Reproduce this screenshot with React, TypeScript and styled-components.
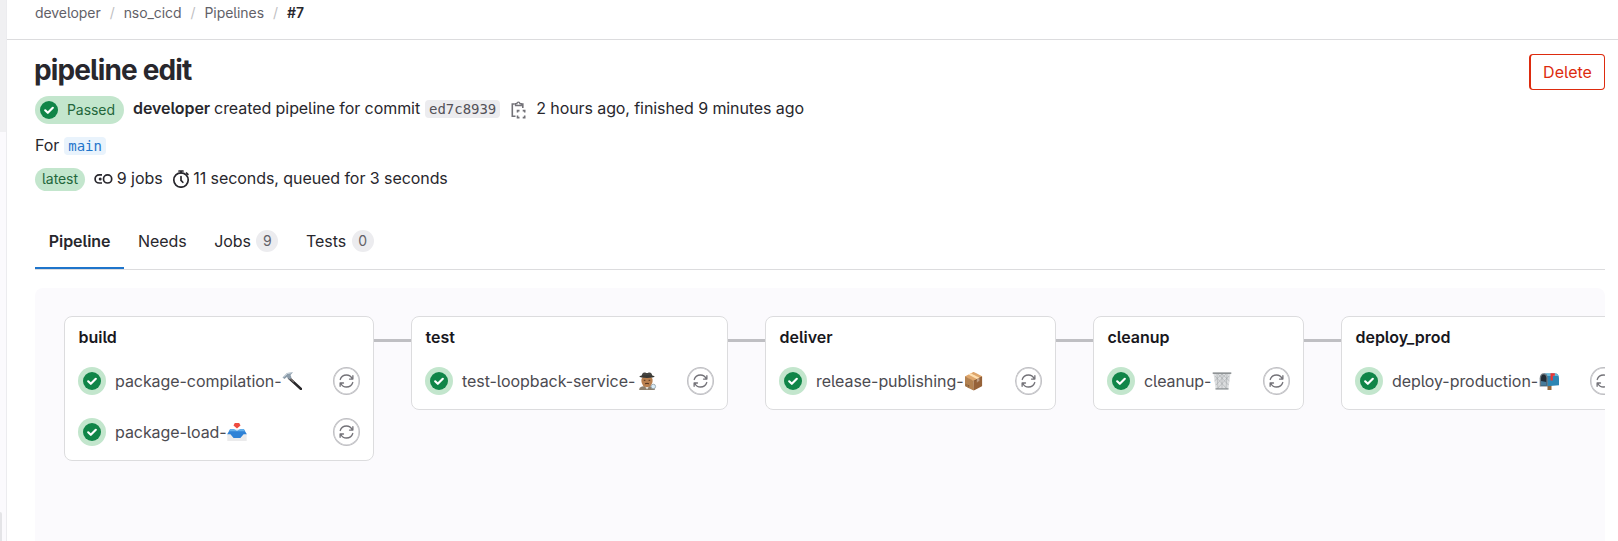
import React from "react";
import styled, { createGlobalStyle } from "styled-components";

const GlobalStyle = createGlobalStyle`
  *, *::before, *::after { box-sizing: border-box; }
  body {
    margin: 0;
    background: #fff;
    color: #28272d;
    font: 400 16px/24px Inter, "Liberation Sans", sans-serif;
    font-feature-settings: "cv05";
    letter-spacing: -0.07px;
    overflow: hidden;
  }
  svg { display: block; flex: none; }
`;

const Shell = styled.div`
  display: flex;
  height: 541px;
  overflow: hidden;
`;

const Sidebar = styled.aside`
  display: flex;
  flex-direction: column;
  justify-content: space-between;
  flex: none;
  width: 7px;
  background: #fbfafd;
  border-right: 1px solid #ececef;
`;

const SidebarTop = styled.div`
  height: 132px;
  background: #f0f0f2;
`;

const SidebarHandle = styled.div`
  width: 2px;
  height: 29px;
  background: #e4e4e7;
  border-top-right-radius: 2px;
`;

const Main = styled.main`
  flex: 1;
  min-width: 0;
  display: flex;
  flex-direction: column;
`;

const TopBar = styled.nav`
  display: flex;
  flex: none;
  height: 40px;
  padding-left: 28px;
  border-bottom: 1px solid #dcdcde;
  font-size: 14px;
  line-height: 26px;
  color: #626168;
`;

const Crumb = styled.span<{ $current?: boolean }>`
  font-weight: ${(p) => (p.$current ? 600 : 400)};
  color: ${(p) => (p.$current ? "#28272d" : "#626168")};
  &:not(:last-child)::after {
    content: "/";
    padding: 0 9px;
    color: #bfbfc3;
  }
`;

const Content = styled.div`
  flex: 1;
  display: flex;
  flex-direction: column;
  min-height: 0;
  padding: 14px 13px 0 28px;
`;

const TitleRow = styled.header`
  display: flex;
  justify-content: space-between;
  height: 42px;
`;

const Title = styled.h1`
  margin: 0 0 0 -1px;
  font-size: 28px;
  line-height: 33px;
  font-weight: 650;
  letter-spacing: -0.88px;
`;

const DeleteButton = styled.button`
  width: 76px;
  height: 36px;
  padding: 0;
  border: 1px solid #dd2b0e;
  border-left-width: 2px;
  border-radius: 4px;
  background: #fff;
  color: #dd2b0e;
  font: inherit;
`;

const StatusRow = styled.div`
  display: flex;
  height: 28px;
  line-height: 25px;
  white-space: pre;
`;

const StatusPill = styled.span`
  display: flex;
  align-items: center;
  width: 89px;
  height: 28px;
  padding-left: 5px;
  margin-right: 9px;
  gap: 9px;
  border-radius: 14px;
  background: #c3e6cd;
  color: #24663b;
  font-size: 14px;
  line-height: 27px;
`;

const PillText = styled.span`
  height: 28px;
`;

const Strong = styled.strong`
  font-weight: 600;
  margin-right: 4px;
`;

const Chip = styled.code<{ $link?: boolean }>`
  height: 18px;
  padding: 0 4px;
  border-radius: 4px;
  background: ${(p) => (p.$link ? "#e9f3fc" : "#ececef")};
  color: ${(p) => (p.$link ? "#1f75cb" : "#535158")};
  font: 14px/18px "DejaVu Sans Mono", monospace;
  letter-spacing: ${(p) => (p.$link ? "0" : "-0.04px")};
`;

const CommitChip = styled(Chip)`
  margin: 4px 10px 0 5px;
`;

const CopyIcon = styled.svg`
  margin: 5px 9px 0 0;
`;

const Times = styled.span`
  letter-spacing: -0.09px;
`;

const RefRow = styled.div`
  display: flex;
  gap: 5px;
  height: 22px;
  margin-top: 11px;
  line-height: 21px;
`;

const BranchChip = styled(Chip)`
  margin-top: 2px;
`;

const StatsRow = styled.div`
  display: flex;
  height: 23px;
  margin-top: 11px;
  line-height: 21px;
`;

const LatestPill = styled.span`
  width: 50px;
  margin-right: 9px;
  border-radius: 12px;
  background: #c3e6cd;
  color: #24663b;
  font-size: 14px;
  line-height: 22px;
  text-align: center;
`;

const Stat = styled.span`
  display: flex;
  margin-right: 9px;
  gap: 3.8px;
  svg { margin-top: 2px; }
`;

const Tabs = styled.div`
  display: flex;
  flex: none;
  height: 57px;
  margin-top: 22px;
  border-bottom: 1px solid #dcdcde;
`;

const Tab = styled.div<{ $active?: boolean }>`
  display: flex;
  align-items: center;
  height: 56px;
  padding: 0 13.8px;
  font-weight: ${(p) => (p.$active ? 600 : 400)};
  box-shadow: ${(p) => (p.$active ? "inset 0 -2px #1f75cb" : "none")};
`;

const Count = styled.span`
  min-width: 22px;
  height: 22px;
  margin-left: 5.5px;
  padding: 0 6.5px;
  border-radius: 11px;
  background: #ececef;
  color: #626168;
  font-size: 14px;
  line-height: 22px;
  text-align: center;
`;

const Graph = styled.section`
  flex: 1;
  display: flex;
  align-items: flex-start;
  margin-top: 18px;
  padding: 28px 0 0 29px;
  border-radius: 8px 8px 0 0;
  background: #fbfafd;
  overflow: hidden;
`;

const Link = styled.div`
  flex: none;
  width: 37px;
  height: 3px;
  margin-top: 23px;
  background: #bfbfc3;
`;

const Stage = styled.article<{ $width: number }>`
  flex: none;
  width: ${(p) => p.$width}px;
  padding: 8px 13px 14px;
  border: 1px solid #dcdcde;
  border-radius: 8px;
  background: #fff;
`;

const StageName = styled.h2`
  margin: 0 0 18px 0.5px;
  font-size: 16px;
  line-height: 24px;
  font-weight: 600;
  letter-spacing: -0.03px;
  color: #18171d;
`;

const Job = styled.div`
  display: flex;
  align-items: center;
  height: 28px;
  & + & { margin-top: 23px; }
`;

const JobStatus = styled.span`
  display: grid;
  place-items: center;
  flex: none;
  width: 28px;
  height: 28px;
  margin-right: 9px;
  border-radius: 50%;
  background: #c3e6cd;
`;

const JobName = styled.span`
  display: flex;
  flex: 1;
  align-items: center;
  gap: 0.8px;
  color: #4c4b51;
  letter-spacing: -0.06px;
  white-space: nowrap;
`;

const RetryButton = styled.button`
  display: grid;
  place-items: center;
  flex: none;
  width: 27px;
  height: 28px;
  padding: 0;
  border: 1px solid #bfbfc3;
  box-shadow: inset 0 0 0 0.5px #bfbfc3;
  border-radius: 50%;
  background: #fff;
  color: #737278;
`;

const Check = () => (
  <svg width="18" height="18" viewBox="0 0 18 18" fill="none">
    <circle cx="9" cy="9" r="9" fill="#108548" />
    <path d="m5.2 9.3 2.6 2.5 5-5" stroke="#fff" strokeWidth="2.2" strokeLinecap="round" strokeLinejoin="round" />
  </svg>
);

const Retry = () => (
  <svg width="15" height="16" viewBox="0 0 16 16" fill="none" stroke="currentColor" strokeWidth="1.4" strokeLinecap="round" strokeLinejoin="round">
    <path d="M1.300 6.400C2.300 3.400 4.900 1.600 8 1.600c2.600 0 4.800 1.400 6 3.800M14.800 2.400v3.500h-3.600" />
    <path d="M14.700 9.600c-1 3-3.600 4.800-6.700 4.800-2.600 0-4.800-1.400-6-3.800M1.200 13.600v-3.500h3.600" />
  </svg>
);

const Copy = () => (
  <CopyIcon width="17" height="18" viewBox="0 0 17 18" fill="none" stroke="#737278" strokeWidth="1.600">
    <path d="M5.500 15.200H2.300V3h2.500M11.500 3h1.300v4" />
    <path d="M5.500 4.500V2.700h1.400a1.500 1.500 0 0 1 3 0h1.400v1.800z" strokeWidth="1.300" />
    <path d="M7.500 11.600V9.600h2M12.700 9.600h2v2M14.700 14.600v2h-2M9.500 16.600h-2v-2" />
  </CopyIcon>
);

const Jobs = () => (
  <svg width="19" height="17" viewBox="0 0 19 17" fill="none" stroke="#28272d" strokeWidth="1.700">
    <circle cx="13.600" cy="8.900" r="4.100" />
    <path d="M8 4.800H5.200a4.100 4.100 0 0 0 0 8.200H8" />
    <circle cx="6.200" cy="8.900" r="1.500" fill="#28272d" stroke="none" />
  </svg>
);

const Timer = () => (
  <svg width="18" height="18" viewBox="0 0 18 18" fill="none" stroke="#28272d" strokeWidth="1.700" strokeLinecap="round">
    <circle cx="9" cy="10" r="7.200" />
    <path d="M7 1h4M9 1v2M14.500 3l1.400 1.400M9 6.500v3.800l1.800 2" />
  </svg>
);

const emojiArt: Record<string, React.ReactNode> = {
  hammer: (
    <>
      <path d="m7 6 12 11" stroke="#29272a" strokeWidth="2.400" strokeLinecap="round" />
      <path d="m7 5.500 5 4.500" stroke="#716a68" strokeWidth="1.600" />
      <path d="M.5 5.500 5 1l6-.7L8.500 3l1 2.500-2 2.200L4.800 5 2.500 7z" fill="#8d9dab" />
      <path d="m1.500 5 4-3.500 4-.7" stroke="#d1dbe2" />
    </>
  ),
  inbox: (
    <>
      <path d="M.3 10.500h19.400V18H.3z" fill="#ebebec" />
      <path d="M3.200 6h13.600l3 5.200h-3.200L13.400 15H6.600l-3.200-3.800H.2z" fill="#2f82d6" />
      <path d="M3.200 6h13.600l1.300 2.300H1.900z" fill="#64aeea" />
      <path d="M7 6h6l-3 1.700z" fill="#e4eef7" />
      <path d="M7.800 0h4.400l1.300 2.500L10 5.500l-3.500-3z" fill="#ee4c40" />
    </>
  ),
  detective: (
    <>
      <path d="M2.200 18c0-3 2-4 7.800-4s7.800 1 7.800 4z" fill="#8c806e" />
      <path d="m7.500 13.500 2.500 4 2.500-4z" fill="#f1f0ed" />
      <ellipse cx="10" cy="9" rx="5.600" ry="6.200" fill="#b9804f" />
      <path d="M4.600 4.500C4.900 1.600 5.800.4 7.500.4c1.200 0 1.500.5 2.500.5s1.300-.5 2.500-.5c1.700 0 2.600 1.200 2.900 4.100z" fill="#454440" />
      <ellipse cx="10" cy="4.600" rx="7.600" ry="1.400" fill="#393834" />
      <path d="M6.800 8.300h1.600M11.600 8.300h1.600M8 11.800q2-1 4 0" stroke="#53351f" />
      <circle cx="16.300" cy="14.500" r="2.300" fill="#d9edf8" stroke="#919da4" strokeWidth=".8" />
    </>
  ),
  wastebasket: (
    <>
      <path d="m1.500 1.500 2.200 16h12.600l2.200-16z" fill="#dcdee0" />
      <path d="m3 4 12 13M6 2l10.500 11M10 2l7.500 7M17 4 5 17M14 2 4 13M10 2 2.500 9M5 2l1 15M10 2v15M15 2l-1 15" stroke="#989c9e" strokeWidth=".45" />
      <path d="M3.500 16.800h13" stroke="#8d9295" strokeWidth="1.300" />
      <path d="M.7 1.200h18.600" stroke="#6f7477" strokeWidth="1.300" />
    </>
  ),
  mailbox: (
    <>
      <path d="M8.500 12h4v6h-4z" fill="#946a3d" />
      <path d="M5 1.500h11.500c2.200 0 3.500 2 3.500 5v6.800l-12 1z" fill="#2d86b4" />
      <path d="M7 1.500h9.500c1.500 0 2.500 1 3 2.500H8z" fill="#68b8d8" />
      <path d="M.7 14.500V6.300C.7 3.200 2.200 1.200 4.600 1.200S8.700 3 8.700 6v8.500z" fill="#6e7981" />
      <path d="M2 13.800V6.500c0-2.400 1-4 2.600-4s2.800 1.400 2.800 3.700v7.600z" fill="#202b35" />
      <path d="m2 9 5.400 1v3.800H2z" fill="#477b99" />
      <path d="M11.500 8.500V1.200h4.300v2.600h-2v4.700z" fill="#ef3330" />
    </>
  ),
};

const Emoji = styled.span`
  font-size: 17px;
  line-height: 18px;
  letter-spacing: 0;
  margin-left: -1px;
`;

const JobEmoji = ({ kind }: { kind: string }) =>
  kind === "package" ? (
    <Emoji>📦</Emoji>
  ) : (
    <svg width={kind === "detective" ? 23 : 20} height="18" viewBox={kind === "detective" ? "-1 0 23 18" : "0 0 20 18"} fill="none" role="img" aria-label={kind}>
      {emojiArt[kind]}
    </svg>
  );

const stages = [
  { name: "build", width: 310, jobs: [["package-compilation-", "hammer"], ["package-load-", "inbox"]] },
  { name: "test", width: 317, jobs: [["test-loopback-service-", "detective"]] },
  { name: "deliver", width: 291, jobs: [["release-publishing-", "package"]] },
  { name: "cleanup", width: 211, jobs: [["cleanup-", "wastebasket"]] },
  { name: "deploy_prod", width: 290, jobs: [["deploy-production-", "mailbox"]] },
];

export default function App() {
  return (
    <>
      <GlobalStyle />
      <Shell>
        <Sidebar>
          <SidebarTop />
          <SidebarHandle />
        </Sidebar>
        <Main>
          <TopBar>
            <Crumb>developer</Crumb>
            <Crumb>nso_cicd</Crumb>
            <Crumb>Pipelines</Crumb>
            <Crumb $current>#7</Crumb>
          </TopBar>
          <Content>
            <TitleRow>
              <Title>pipeline edit</Title>
              <DeleteButton>Delete</DeleteButton>
            </TitleRow>
            <StatusRow>
              <StatusPill><Check /><PillText>Passed</PillText></StatusPill>
              <Strong>developer</Strong>
              <span>created pipeline for commit</span>
              <CommitChip>ed7c8939</CommitChip>
              <Copy />
              <Times>2 hours ago, finished 9 minutes ago</Times>
            </StatusRow>
            <RefRow>
              <span>For</span>
              <BranchChip $link>main</BranchChip>
            </RefRow>
            <StatsRow>
              <LatestPill>latest</LatestPill>
              <Stat><Jobs />9 jobs</Stat>
              <Stat><Timer />11 seconds, queued for 3 seconds</Stat>
            </StatsRow>
            <Tabs>
              <Tab $active>Pipeline</Tab>
              <Tab>Needs</Tab>
              <Tab>Jobs<Count>9</Count></Tab>
              <Tab>Tests<Count>0</Count></Tab>
            </Tabs>
            <Graph>
              {stages.map((stage, i) => (
                <React.Fragment key={stage.name}>
                  {i > 0 && <Link />}
                  <Stage $width={stage.width}>
                    <StageName>{stage.name}</StageName>
                    {stage.jobs.map(([name, emoji]) => (
                      <Job key={name}>
                        <JobStatus><Check /></JobStatus>
                        <JobName>{name}<JobEmoji kind={emoji} /></JobName>
                        <RetryButton aria-label="Retry"><Retry /></RetryButton>
                      </Job>
                    ))}
                  </Stage>
                </React.Fragment>
              ))}
            </Graph>
          </Content>
        </Main>
      </Shell>
    </>
  );
}
